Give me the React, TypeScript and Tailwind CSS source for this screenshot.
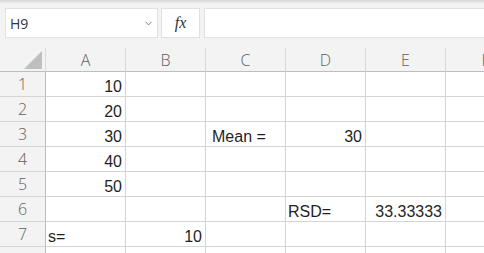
import { ChevronDown } from "lucide-react";

const COLS = ["A", "B", "C", "D", "E", "F"];

type Cell = { text: string; align?: "left" | "right"; pad?: string };

// sheet contents keyed by row number, then column letter
const DATA: Record<number, Record<string, Cell>> = {
  1: { A: { text: "10" } },
  2: { A: { text: "20" } },
  3: {
    A: { text: "30" },
    C: { text: "Mean =", align: "left", pad: "pl-[6px]" },
    D: { text: "30" },
  },
  4: { A: { text: "40" } },
  5: { A: { text: "50" } },
  6: {
    D: { text: "RSD=", align: "left" },
    E: { text: "33.33333" },
  },
  7: {
    A: { text: "s=", align: "left" },
    B: { text: "10" },
  },
  8: {},
};

function FormulaBar() {
  return (
    <div className="h-[48px] bg-[#f3f3f3]">
      <div className="h-[4px] bg-gradient-to-b from-[#d6d6d6] to-[#f3f3f3]" />
      <div className="flex pl-[5px] pt-[4px]">
        <div className="flex h-[30px] w-[153px] items-center justify-between border border-[#e1e1e1] bg-white pl-[4px] pr-[3px]">
          <span className="font-['Open_Sans',sans-serif] text-[14px] text-[#333]">H9</span>
          <ChevronDown size={11} strokeWidth={1.6} className="text-[#555]" />
        </div>
        <div className="ml-[3px] flex h-[30px] w-[39px] items-center justify-center border border-[#e1e1e1] bg-white">
          <span className="font-['Liberation_Serif',serif] text-[16px] italic text-[#333]">fx</span>
        </div>
        <div className="ml-[4px] h-[30px] flex-1 border border-r-0 border-[#e1e1e1] bg-white" />
      </div>
    </div>
  );
}

function Corner() {
  return (
    <div className="flex h-[24px] items-end justify-end border-b border-r border-b-[#bdbdbd] border-r-[#dadada] bg-[#f3f3f3] pb-[2px] pr-[3px]">
      <svg width="18" height="18" viewBox="0 0 18 18">
        <polygon points="18,0 18,18 0,18" fill="#bfbfbf" />
      </svg>
    </div>
  );
}

export default function App() {
  const rows = [1, 2, 3, 4, 5, 6, 7, 8];

  return (
    <div className="h-[253px] w-[484px] overflow-hidden bg-white">
      <FormulaBar />
      <div className="grid w-[526px] grid-cols-[46px_80px_80px_80px_80px_80px_80px]">
        <Corner />
        {COLS.map((c) => (
          <div
            key={c}
            className="flex h-[24px] items-center justify-center border-b border-r border-b-[#bdbdbd] border-r-[#dadada] bg-[#f3f3f3] font-['Open_Sans',sans-serif] text-[16px] font-light text-[#5f5f5f]"
          >
            {c}
          </div>
        ))}

        {rows.map((r) => (
          <RowCells key={r} row={r} />
        ))}
      </div>
    </div>
  );
}

function RowCells({ row }: { row: number }) {
  const cells = DATA[row] ?? {};
  return (
    <>
      <div className="flex h-[25px] items-center justify-center border-b border-r border-b-[#d4d4d4] border-r-[#bdbdbd] bg-[#f3f3f3] font-['Open_Sans',sans-serif] text-[16px] font-light text-[#5f5f5f]">
        {row < 8 ? row : null}
      </div>
      {COLS.map((c) => {
        const cell = cells[c];
        const left = cell?.align === "left";
        return (
          <div
            key={c}
            className={
              "flex h-[25px] items-end overflow-hidden whitespace-nowrap border-b border-r border-[#d4d4d4] pb-[1px] font-['Liberation_Sans',Arial,sans-serif] text-[16px] leading-[16px] text-[#1f1f1f] " +
              (left ? "justify-start " + (cell?.pad ?? "pl-[2px]") : "justify-end pr-[3px]")
            }
          >
            {cell?.text}
          </div>
        );
      })}
    </>
  );
}
